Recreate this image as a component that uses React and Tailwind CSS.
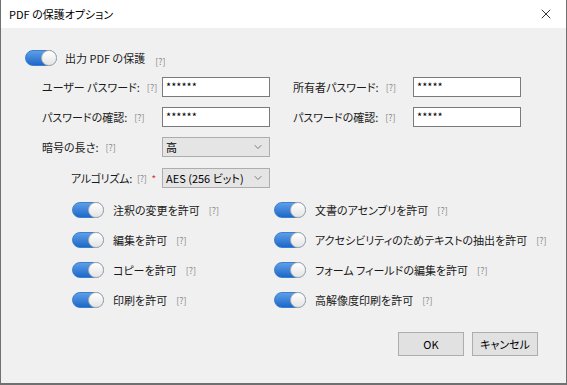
import { ChevronDown, X } from "lucide-react";

const font = { fontFamily: '"Noto Sans CJK JP", "Noto Sans", sans-serif' };

function Help() {
  return <span className="text-[9px] text-[#8a8a8a] leading-none">[?]</span>;
}

function Toggle() {
  return (
    <span className="relative inline-block w-[32px] h-[16px] shrink-0 rounded-full bg-linear-to-b from-[#5d9ee8] to-[#1b68c8] border border-[#3b7fd0]">
      <span className="absolute right-[-1px] top-[-1px] w-[16px] h-[16px] rounded-full bg-linear-to-b from-white to-[#e4e4e4] border border-[#b0b0b0]" />
    </span>
  );
}

function Field({ value }) {
  return (
    <div className="w-[108px] h-[20px] bg-white border border-[#7a7a7a] px-[3px] text-[11px] leading-[16px] text-black">
      {value}
    </div>
  );
}

function Select({ value }) {
  return (
    <div className="w-[108px] h-[20px] bg-[#e5e5e5] border border-[#adadad] pl-[3px] pr-[5px] flex items-center justify-between text-[11px] text-black">
      <span>{value}</span>
      <ChevronDown size={12} strokeWidth={1.5} className="text-[#555]" />
    </div>
  );
}

function Label({ children }) {
  return (
    <div className="flex items-center gap-[7px] text-[11px] text-[#1a1a1a]">
      {children} <Help />
    </div>
  );
}

function Perm({ label }) {
  return (
    <div className="h-[30px] flex items-center gap-[9px]">
      <Toggle />
      <span className="text-[11px] text-[#1a1a1a]">{label}</span>
      <Help />
    </div>
  );
}

export default function App() {
  return (
    <div
      style={font}
      className="w-[567px] h-[385px] flex flex-col border-x border-b-2 border-[#707070] bg-[#f0f0f0] whitespace-nowrap overflow-hidden [font-feature-settings:'palt']"
    >
      {/* Title bar */}
      <div className="h-[28px] shrink-0 bg-white flex items-center justify-between pl-[8px] pr-[12px]">
        <span className="text-[11px] text-black">PDF の保護オプション</span>
        <X size={16} strokeWidth={1.2} className="text-black" />
      </div>

      <div className="flex-1 flex flex-col pl-[24px] pt-[22px]">
        <div className="flex items-center gap-[8px] h-[16px]">
          <Toggle />
          <span className="text-[11px] text-[#1a1a1a]">出力 PDF の保護</span>
          <span className="ml-[2px]">
            <Help />
          </span>
        </div>

        {/* Passwords */}
        <div className="mt-[11px] ml-[17px] grid grid-cols-[120px_108px_23px_120px_108px] gap-y-[10px]">
          <Label>ユーザー パスワード:</Label>
          <Field value="******" />
          <div />
          <Label>所有者パスワード:</Label>
          <Field value="*****" />

          <Label>パスワードの確認:</Label>
          <Field value="******" />
          <div />
          <Label>パスワードの確認:</Label>
          <Field value="*****" />

          <Label>暗号の長さ:</Label>
          <Select value="高" />
        </div>

        <div className="mt-[11px] ml-[17px] flex">
          <div className="w-[120px] shrink-0 pl-[29px] flex items-center gap-[5px] text-[11px] text-[#1a1a1a] tracking-[-0.3px]">
            アルゴリズム: <Help />
            <span className="text-[#e03030] text-[10px]">*</span>
          </div>
          <Select value="AES (256 ビット)" />
        </div>

        {/* Permissions */}
        <div className="mt-[7px] ml-[47px] flex">
          <div className="w-[202px] flex flex-col">
            <Perm label="注釈の変更を許可" />
            <Perm label="編集を許可" />
            <Perm label="コピーを許可" />
            <Perm label="印刷を許可" />
          </div>
          <div className="flex flex-col">
            <Perm label="文書のアセンブリを許可" />
            <Perm label="アクセシビリティのためテキストの抽出を許可" />
            <Perm label="フォーム フィールドの編集を許可" />
            <Perm label="高解像度印刷を許可" />
          </div>
        </div>

        {/* Buttons */}
        <div className="mt-[17px] pr-[28px] flex justify-end gap-[8px]">
          <button className="w-[66px] h-[24px] bg-[#e1e1e1] border border-[#adadad] text-[11px] text-black">
            OK
          </button>
          <button className="w-[66px] h-[24px] bg-[#e1e1e1] border border-[#adadad] text-[11px] text-black">
            キャンセル
          </button>
        </div>
      </div>
    </div>
  );
}
